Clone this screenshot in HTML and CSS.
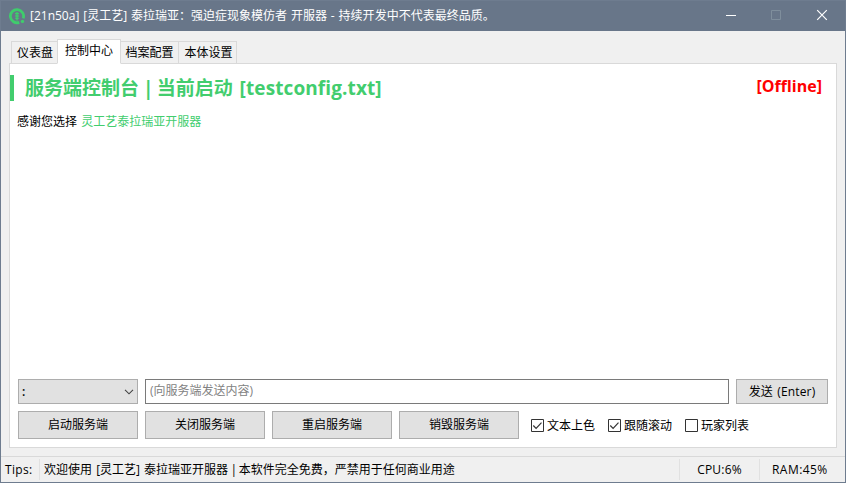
FILE: index.html
```html
<!DOCTYPE html>
<html lang="zh-CN">
<head>
<meta charset="utf-8">
<title>开服器</title>
<link rel="stylesheet" href="styles.css">
</head>
<body>
<div class="window">
  <header class="titlebar">
    <svg class="logo" width="17" height="17" viewBox="0 0 17 17" fill="none" stroke="#3fcd6c">
      <path d="M10.2 14.4A6.6 6.6 0 1 1 14.2 10.4" stroke-width="2.8"/>
      <path d="M8 4v8.5" stroke-width="1.5"/>
      <path d="M6 5.6h4M6.2 8h3.6M6.2 10.4h3.6" stroke-width="1.3"/>
      <circle cx="13.5" cy="13.4" r="1.7" fill="#3fcd6c" stroke="none"/>
    </svg>
    <h1 class="title">[21n50a] [灵工艺] 泰拉瑞亚：强迫症现象模仿者 开服器 - 持续开发中不代表最终品质。</h1>
    <div class="controls">
      <svg width="46" height="30" viewBox="0 0 46 30"><path d="M18 14.5h10" stroke="#fff"/></svg>
      <svg width="46" height="30" viewBox="0 0 46 30"><path d="M17.5 9.5h9v9h-9z" fill="none" stroke="#7f8e9c"/></svg>
      <svg width="45" height="30" viewBox="0 0 45 30"><path d="M17.2 9.2l9.6 9.6M26.8 9.2l-9.6 9.6" stroke="#fff" stroke-width="1.2"/></svg>
    </div>
  </header>
  <nav class="tabs">
    <div class="tab first">仪表盘</div>
    <div class="tab active">控制中心</div>
    <div class="tab">档案配置</div>
    <div class="tab last">本体设置</div>
  </nav>
  <main class="panel">
    <div class="heading">
      <h2 class="heading-text">服务端控制台<span class="divider"> | </span>当前启动 <span class="config">[testconfig.txt]</span></h2>
      <strong class="state">[Offline]</strong>
    </div>
    <div class="log">感谢您选择 <span class="brand">灵工艺泰拉瑞亚开服器</span></div>
    <div class="row command">
      <div class="select"><span class="prefix">:</span>
        <svg width="10" height="6" viewBox="0 0 10 6"><path d="M1 .8l4 4 4-4" fill="none" stroke="#444" stroke-width="1.1"/></svg>
      </div>
      <div class="input">(向服务端发送内容)</div>
      <div class="button send">发送 (Enter)</div>
    </div>
    <div class="row actions">
      <div class="button">启动服务端</div>
      <div class="button">关闭服务端</div>
      <div class="button">重启服务端</div>
      <div class="button">销毁服务端</div>
      <div class="checks">
        <div class="check"><svg class="box" width="13" height="13" viewBox="0 0 13 13"><path d="M.5.5h12v12H.5z" fill="#fff" stroke="#333"/><path d="M2.3 6.5l2.8 2.8 5.4-5.6" fill="none" stroke="#333" stroke-width="1.2"/></svg><span>文本上色</span></div>
        <div class="check"><svg class="box" width="13" height="13" viewBox="0 0 13 13"><path d="M.5.5h12v12H.5z" fill="#fff" stroke="#333"/><path d="M2.3 6.5l2.8 2.8 5.4-5.6" fill="none" stroke="#333" stroke-width="1.2"/></svg><span>跟随滚动</span></div>
        <div class="check"><svg class="box" width="13" height="13" viewBox="0 0 13 13"><path d="M.5.5h12v12H.5z" fill="#fff" stroke="#333"/></svg><span>玩家列表</span></div>
      </div>
    </div>
  </main>
  <footer class="status">
    <div class="cell tips">Tips:</div>
    <div class="cell message">欢迎使用 <span class="wide">[灵工艺] </span>泰拉瑞亚开服器<span class="bar"> | </span>本软件完全免费，严禁用于任何商业用途</div>
    <div class="cell cpu">CPU:6%</div>
    <div class="cell ram">RAM:45%</div>
  </footer>
</div>
</body>
</html>
```
FILE: styles.css
```css
* { box-sizing: border-box; }
body {
  margin: 0;
  font: 12px/16px "Open Sans", "Noto Sans CJK SC", sans-serif;
  color: #000;
  white-space: nowrap;
}
.window {
  width: 846px;
  height: 483px;
  display: flex;
  flex-direction: column;
  background: #f0f0f0;
  border: 1px solid #6e7c8f;
  overflow: hidden;
}
.titlebar {
  height: 30px;
  flex: none;
  display: flex;
  align-items: center;
  padding-left: 8px;
  background: #687689;
  color: #fff;
}
.logo { flex: none; margin-right: 4px; }
.title { margin: 0; font-size: 12px; font-weight: 400; word-spacing: 0.8px; }
.controls { display: flex; margin-left: auto; }
.tabs {
  height: 33px;
  flex: none;
  display: flex;
  align-items: flex-end;
  padding-left: 10px;
  position: relative;
  z-index: 1;
}
.tab {
  width: 58px;
  height: 23px;
  border: 1px solid #d9d9d9;
  border-left: 0;
  text-align: center;
  line-height: 22px;
}
.tab.first { width: 46px; padding-left: 1px; border-left: 1px solid #d9d9d9; border-right: 0; }
.tab.last { padding-left: 2px; }
.tab.active {
  width: 64px;
  height: 25px;
  border-left: 1px solid #d9d9d9;
  border-bottom-color: #fff;
  background: #fff;
}
.panel {
  width: 828px;
  height: 385px;
  flex: none;
  display: flex;
  flex-direction: column;
  margin: -1px 0 0 8px;
  padding: 11px 8px 8px 0;
  border: 1px solid #d9d9d9;
  background: #fff;
}
.heading {
  height: 26px;
  flex: none;
  display: flex;
  justify-content: space-between;
  padding: 0 6px 0 11px;
  border-left: 4px solid #42cd6e;
}
.heading-text {
  margin: 0;
  font-size: 19px;
  font-weight: 700;
  line-height: 27px;
  color: #42cd6e;
}
.divider { letter-spacing: -0.9px; }
.config { margin-left: 2px; letter-spacing: 0.1px; }
.state { font-size: 16px; line-height: 22px; color: #f00; }
.log { flex: 1; padding: 13px 0 0 7px; word-spacing: 1px; }
.brand { color: #42cd6e; }
.row { display: flex; flex: none; gap: 7px; padding-left: 8px; }
.command { height: 25px; margin-bottom: 7px; }
.actions { height: 28px; }
.button, .select { width: 120px; background: #e1e1e1; border: 1px solid #adadad; }
.button { display: flex; align-items: center; justify-content: center; }
.button.send { width: 92px; padding-top: 1px; word-spacing: 1px; letter-spacing: 0.15px; }
.select { display: flex; align-items: center; justify-content: space-between; padding: 0 3px; }
.prefix { font-weight: 600; }
.input { flex: 1; padding: 0 4px; border: 1px solid #7a7a7a; color: #828282; line-height: 22px; }
.checks { display: flex; align-items: center; gap: 13px; padding-left: 5px; }
.check { display: flex; align-items: center; width: 64px; gap: 3px; padding-top: 1px; }
.box { flex: none; }
.status {
  height: 26px;
  display: flex;
  align-items: center;
  margin-top: 8px;
  border-top: 1px solid #d9d9d9;
}
.cell { height: 21px; line-height: 21px; }
.tips { width: 39px; padding-left: 4px; border-right: 1px solid #e1e1e1; letter-spacing: 0.3px; }
.message { flex: 1; padding-left: 4px; }
.wide { margin-left: 1px; word-spacing: 1px; }
.bar { letter-spacing: -0.7px; }
.cpu { width: 80px; border-left: 1px solid #e1e1e1; text-align: center; letter-spacing: 0.2px; }
.ram { width: 86px; padding-left: 12px; border-left: 1px solid #e1e1e1; letter-spacing: 0.45px; }
```
